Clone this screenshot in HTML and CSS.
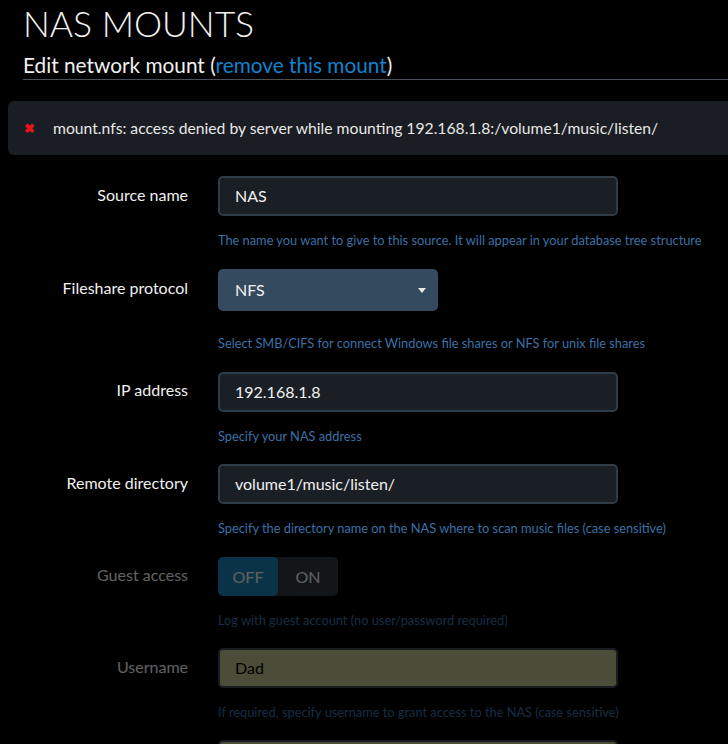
FILE: index.html
```html
<!DOCTYPE html>
<html>
<head>
<meta charset="utf-8">
<link rel="stylesheet" href="styles.css">
</head>
<body>
<div class="page">
  <h1 class="title">NAS MOUNTS</h1>
  <h2 class="subtitle">Edit network mount (<a class="link">remove this mount</a>)</h2>
  <div class="alert"><span class="alert-x">✖</span><span>mount.nfs: access denied by server while mounting 192.168.1.8:/volume1/music/listen/</span></div>

  <div class="row">
    <label class="label">Source name</label>
    <div class="field"><div class="input">NAS</div></div>
  </div>
  <div class="help">The name you want to give to this source. It will appear in your database tree structure</div>

  <div class="row">
    <label class="label">Fileshare protocol</label>
    <div class="field"><div class="select">NFS<span class="caret"></span></div></div>
  </div>
  <div class="help help-select">Select SMB/CIFS for connect Windows file shares or NFS for unix file shares</div>

  <div class="row">
    <label class="label">IP address</label>
    <div class="field"><div class="input">192.168.1.8</div></div>
  </div>
  <div class="help">Specify your NAS address</div>

  <div class="row">
    <label class="label">Remote directory</label>
    <div class="field"><div class="input">volume1/music/listen/</div></div>
  </div>
  <div class="help">Specify the directory name on the NAS where to scan music files (case sensitive)</div>

  <div class="disabled">
    <div class="row">
      <label class="label">Guest access</label>
      <div class="field"><div class="toggle"><span class="tog tog-off">OFF</span><span class="tog tog-on">ON</span></div></div>
    </div>
    <div class="help">Log with guest account (no user/password required)</div>

    <div class="row">
      <label class="label">Username</label>
      <div class="field"><div class="input input-auto">Dad</div></div>
    </div>
    <div class="help">If required, specify username to grant access to the NAS (case sensitive)</div>

    <div class="row row-top">
      <label class="label"></label>
      <div class="field"><div class="input input-auto"></div></div>
    </div>
  </div>
</div>
</body>
</html>
```

FILE: styles.css
```css
html, body {
  margin: 0;
  padding: 0;
  background: #000;
  overflow: hidden;
}
body {
  font-family: Lato, "Open Sans", sans-serif;
  color: #f0f0f0;
}
.page {
  padding: 0 0 0 8px;
}
.title {
  margin: 0 0 0 15px;
  padding-top: 4px;
  font-size: 35.5px;
  font-weight: 300;
  line-height: 40px;
  color: #f2f2f2;
}
.subtitle {
  margin: 8px 0 0 15px;
  font-size: 20.8px;
  font-weight: 400;
  line-height: 26px;
  padding-bottom: 1px;
  border-bottom: 1px solid #4a5058;
  color: #f0f0f0;
}
.link {
  color: #1083d0;
}
.alert {
  margin-top: 21px;
  height: 54px;
  background: #1a1d23;
  border-radius: 6px 0 0 6px;
  display: flex;
  align-items: center;
  padding-left: 16px;
  font-size: 15.7px;
  color: #e8e8e8;
}
.alert-x {
  color: #e8141b;
  font-size: 13px;
  width: 29px;
  font-weight: 700;
}
.row {
  display: flex;
  align-items: center;
  margin-top: 20.5px;
}
.alert + .row {
  margin-top: 21px;
}
.label {
  width: 180px;
  text-align: right;
  font-size: 16px;
  color: #f0f0f0;
  margin-top: -4px;
}
.field {
  margin-left: 30px;
}
.input {
  box-sizing: border-box;
  width: 400px;
  height: 40px;
  background: #1a1f26;
  border: 2px solid #2f3b47;
  border-radius: 5px;
  padding: 0 15px;
  font-size: 16px;
  line-height: 36px;
  color: #f0f0f0;
}
.select {
  position: relative;
  box-sizing: border-box;
  width: 220px;
  height: 42px;
  background: #344a5e;
  border-radius: 5px;
  padding: 0 17px;
  font-size: 16px;
  line-height: 42px;
  color: #f0f0f0;
}
.caret {
  position: absolute;
  right: 12px;
  top: 19px;
  width: 0;
  height: 0;
  border-left: 4px solid transparent;
  border-right: 4px solid transparent;
  border-top: 5px solid #e8e8e8;
}
.help {
  margin: 16px 0 0 210px;
  font-size: 12.8px;
  line-height: 16px;
  color: #3b70a6;
}
.help-select {
  margin-top: 24.5px;
}
.disabled {
  opacity: 0.4;
}
.toggle {
  display: flex;
  width: 120px;
  height: 39px;
  border-radius: 5px;
  overflow: hidden;
  background: #31373f;
}
.tog {
  display: flex;
  align-items: center;
  justify-content: center;
  font-size: 16px;
  color: #f0f0f0;
}
.tog-off {
  width: 60px;
  background: #1a80b4;
  border-radius: 5px;
}
.tog-on {
  flex: 1;
}
.input-auto {
  background: #bcc18f;
  border-color: #3f4a56;
  color: #000;
}
.row-top {
  margin-top: 19.5px;
}
```
